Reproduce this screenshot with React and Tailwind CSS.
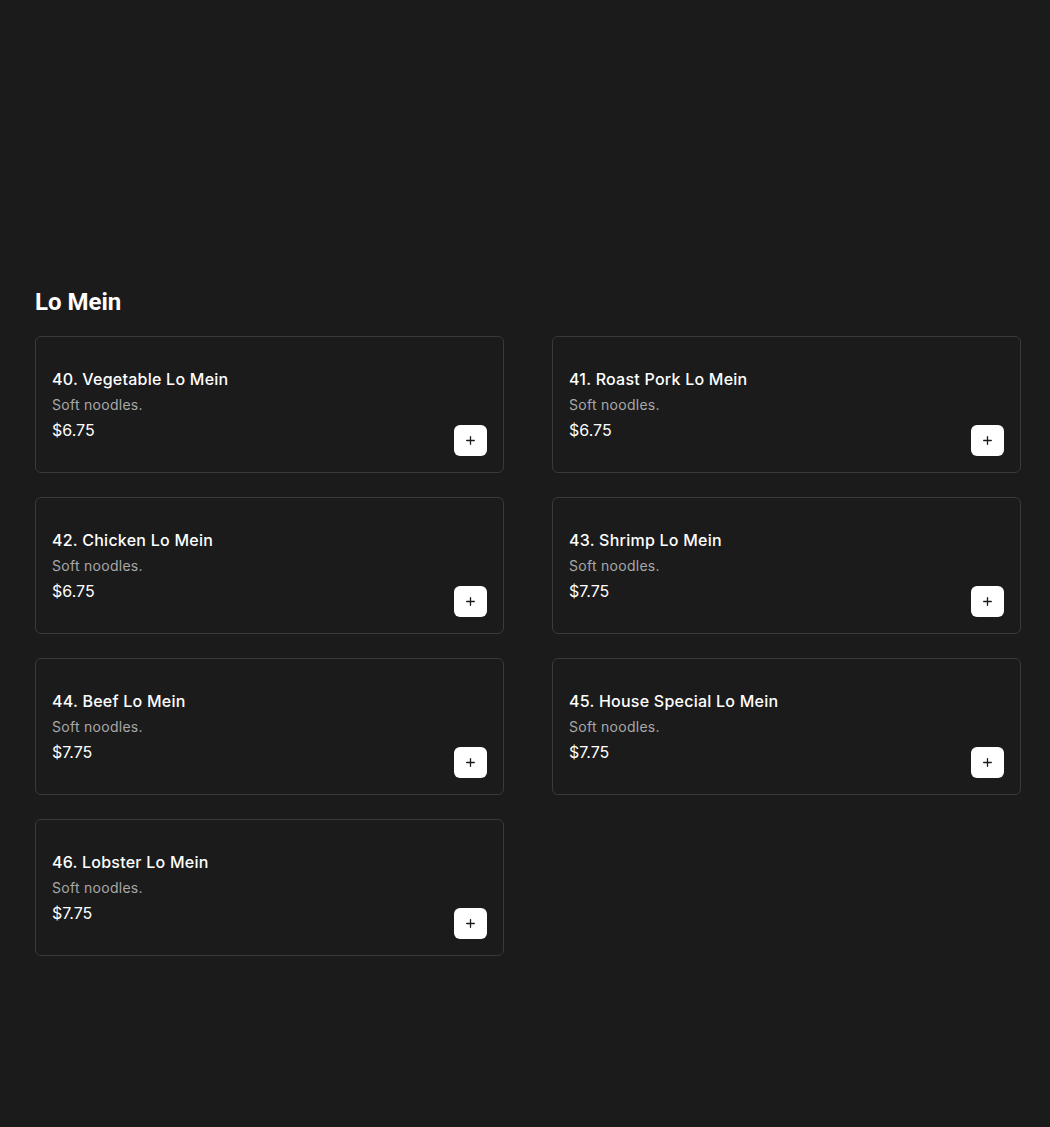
import React from 'react';
import { Plus } from 'lucide-react';

const items = [
    { id: 40, name: 'Vegetable Lo Mein', price: '6.75' },
    { id: 41, name: 'Roast Pork Lo Mein', price: '6.75' },
    { id: 42, name: 'Chicken Lo Mein', price: '6.75' },
    { id: 43, name: 'Shrimp Lo Mein', price: '7.75' },
    { id: 44, name: 'Beef Lo Mein', price: '7.75' },
    { id: 45, name: 'House Special Lo Mein', price: '7.75' },
    { id: 46, name: 'Lobster Lo Mein', price: '7.75' }
];

const MenuCard = ({ item }) => (
    <div className="flex items-end justify-between h-[137px] border border-[#3a3a3a] rounded-md bg-[#1b1b1b] p-4">
        <div className="self-start mt-[14px]">
            <p className="text-[16px] leading-6 font-medium text-white tracking-[0.015em]">
                {item.id}. {item.name}
            </p>
            <p className="text-[14px] leading-5 text-[#a8a8a8] mt-[4px] tracking-[0.02em]">Soft noodles.</p>
            <p className="text-[16px] leading-6 text-white mt-[3px]">${item.price}</p>
        </div>
        <button className="w-[33px] h-[31px] bg-white rounded-md flex items-center justify-center text-[#1b1b1b]">
            <Plus size={13} strokeWidth={2.4} />
        </button>
    </div>
);

export default function App() {
    return (
        <div className="min-h-[1127px] bg-[#1b1b1b] pl-[35px] pr-[29px] pt-[286px] pb-10" style={{ fontFamily: 'Inter, "Noto Sans", sans-serif' }}>
            <h2 className="text-[24px] leading-8 font-bold text-white mb-[18px]" style={{ fontFamily: 'Roboto, sans-serif' }}>
                Lo Mein
            </h2>
            <div className="grid grid-cols-2 gap-x-12 gap-y-6">
                {items.map(item => (
                    <MenuCard key={item.id} item={item} />
                ))}
            </div>
        </div>
    );
}
